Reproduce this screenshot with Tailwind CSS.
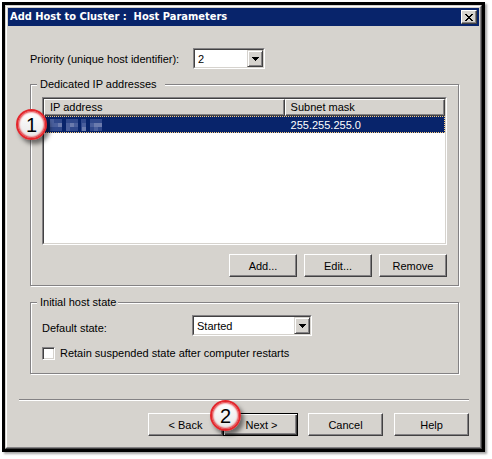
<!DOCTYPE html>
<html lang="en">
<head>
<meta charset="utf-8">
<title>Add Host to Cluster</title>
<script src="https://cdn.jsdelivr.net/npm/@tailwindcss/browser@4"></script>
</head>
<body class="bg-white pt-[2px] pr-[7px] pb-[7px] pl-[2px] font-['Liberation_Sans',sans-serif] text-[11px] leading-[16px] text-black">
<main class="relative border-[3px] border-black bg-[#d6d3ce] shadow-[2px_2px_2px_rgba(0,0,0,0.35)]">
  <div class="border border-t-[#d6d3ce] border-l-[#d6d3ce] border-r-[#424142] border-b-[#424142]">
  <div class="border border-t-white border-l-white border-r-[#848284] border-b-[#848284] px-px pt-px">

    <header class="flex h-[18px] items-center justify-between bg-[#08246b] pr-[2px] pl-[2px]">
      <h1 class="font-['DejaVu_Sans_Condensed','DejaVu_Sans',sans-serif] text-[11px] leading-[16px] font-bold whitespace-pre text-white">Add Host to Cluster :  Host Parameters</h1>
      <button type="button" aria-label="Close" class="flex h-[14px] w-[16px] items-center justify-center border border-t-white border-l-white border-r-[#424142] border-b-[#424142] bg-[#d6d3ce] shadow-[inset_-1px_-1px_0_#848284]">
        <svg class="h-[7px] w-[8px]" viewBox="0 0 8 7" shape-rendering="crispEdges"><path d="M0 0h2v1h1v1h2v-1h1v-1h2v1h-1v1h-1v1h-1v1h1v1h1v1h1v1h-2v-1h-1v-1h-2v1h-1v1h-2v-1h1v-1h1v-1h1v-1h-1v-1h-1v-1h-1z"/></svg>
      </button>
    </header>

    <form class="pr-[20px] pl-[22px]">
      <div class="mt-[22px] flex items-center">
        <label for="priority" class="w-[163px] whitespace-nowrap">Priority (unique host identifier):</label>
        <div class="relative h-[21px] w-[72px] border border-t-[#848284] border-l-[#848284] border-r-white border-b-white">
          <select id="priority" class="block h-full w-full appearance-none border border-t-[#424142] border-l-[#424142] border-r-[#d6d3ce] border-b-[#d6d3ce] bg-white pl-[3px] outline-none"><option>2</option></select>
          <span class="pointer-events-none absolute top-px right-px bottom-px flex w-[16px] items-center justify-center border border-t-[#d6d3ce] border-l-[#d6d3ce] border-r-[#424142] border-b-[#424142] bg-[#d6d3ce] shadow-[inset_1px_1px_0_#fff,inset_-1px_-1px_0_#848284]">
            <svg class="h-[4px] w-[7px]" viewBox="0 0 7 4" shape-rendering="crispEdges"><path d="M0 0h7v1h-1v1h-1v1h-1v1h-1v-1h-1v-1h-1v-1h-1z"/></svg>
          </span>
        </div>
      </div>

      <fieldset class="mt-[7px] border border-[#848284] px-[11px] pb-[8px] shadow-[1px_1px_0_#fff,inset_1px_1px_0_#fff]">
        <legend class="-ml-[5px] bg-[#d6d3ce] pr-[8px] pl-[3px]">Dedicated IP addresses</legend>
        <div class="mt-[5px] h-[148px] border border-t-[#848284] border-l-[#848284] border-r-white border-b-white">
        <div class="h-full border border-t-[#424142] border-l-[#424142] border-r-[#d6d3ce] border-b-[#d6d3ce] bg-white">
          <table class="w-full table-fixed border-separate border-spacing-0 text-left">
            <colgroup><col class="w-[60%]"><col></colgroup>
            <thead>
              <tr class="bg-[#d6d3ce]">
                <th class="h-[17px] border border-t-white border-l-white border-r-[#424142] border-b-[#424142] p-0 pl-[5px] font-normal leading-[15px] shadow-[inset_-1px_-1px_0_#848284]">IP address</th>
                <th class="h-[17px] border border-t-white border-l-white border-r-[#424142] border-b-[#424142] p-0 pl-[5px] font-normal leading-[15px] shadow-[inset_-1px_-1px_0_#848284]">Subnet mask</th>
              </tr>
            </thead>
            <tbody>
              <tr class="bg-[#08246b] text-white outline-1 -outline-offset-1 outline-[#f7cb7b] outline-dotted">
                <td class="h-[17px] p-0 pl-[6px]">
                  <svg role="img" aria-label="Hidden address" class="h-[12px] w-[52px]" viewBox="0 0 52 12" shape-rendering="crispEdges">
                    <path fill="#31498c" d="M0 0h12v12h-12zM16 0h12v12h-12zM31 0h5v12h-5zM40 0h12v12h-12z"/>
                    <path fill="#4a5f9c" d="M0 0h4v8h-4zM4 4h4v4h-4zM16 4h4v8h-4zM24 4h4v4h-4zM32 4h4v4h-4zM40 4h4v4h-4zM44 8h4v4h-4z"/>
                    <path fill="#6b7bad" d="M8 4h4v4h-4zM20 4h4v4h-4zM32 8h4v4h-4zM44 4h4v4h-4zM48 4h4v4h-4z"/>
                  </svg>
                </td>
                <td class="h-[17px] p-0 pl-[6px]">255.255.255.0</td>
              </tr>
            </tbody>
          </table>
        </div>
        </div>
        <div class="mt-[9px] flex justify-end gap-[7px]">
          <button type="button" class="h-[23px] w-[68px] border border-t-white border-l-white border-r-[#424142] border-b-[#424142] shadow-[inset_-1px_-1px_0_#848284]">Add...</button>
          <button type="button" class="h-[23px] w-[68px] border border-t-white border-l-white border-r-[#424142] border-b-[#424142] shadow-[inset_-1px_-1px_0_#848284]">Edit...</button>
          <button type="button" class="h-[23px] w-[68px] border border-t-white border-l-white border-r-[#424142] border-b-[#424142] shadow-[inset_-1px_-1px_0_#848284]">Remove</button>
        </div>
      </fieldset>

      <fieldset class="mt-[8px] border border-[#848284] px-[11px] pb-[12px] shadow-[1px_1px_0_#fff,inset_1px_1px_0_#fff]">
        <legend class="-ml-[5px] bg-[#d6d3ce] pr-[2px] pl-[3px]">Initial host state</legend>
        <div class="mt-[5px] flex items-center">
          <label for="state" class="w-[150px] pt-[5px]">Default state:</label>
          <div class="relative h-[21px] w-[120px] border border-t-[#848284] border-l-[#848284] border-r-white border-b-white">
            <select id="state" class="block h-full w-full appearance-none border border-t-[#424142] border-l-[#424142] border-r-[#d6d3ce] border-b-[#d6d3ce] bg-white pl-[3px] outline-none"><option>Started</option></select>
            <span class="pointer-events-none absolute top-px right-px bottom-px flex w-[16px] items-center justify-center border border-t-[#d6d3ce] border-l-[#d6d3ce] border-r-[#424142] border-b-[#424142] bg-[#d6d3ce] shadow-[inset_1px_1px_0_#fff,inset_-1px_-1px_0_#848284]">
              <svg class="h-[4px] w-[7px]" viewBox="0 0 7 4" shape-rendering="crispEdges"><path d="M0 0h7v1h-1v1h-1v1h-1v1h-1v-1h-1v-1h-1v-1h-1z"/></svg>
            </span>
          </div>
        </div>
        <div class="mt-[9px] flex items-center gap-[5px]">
          <input id="retain" type="checkbox" class="h-[13px] w-[13px] appearance-none border border-t-[#848284] border-l-[#848284] border-r-white border-b-white bg-white shadow-[inset_1px_1px_0_#424142,inset_-1px_-1px_0_#d6d3ce]">
          <label for="retain">Retain suspended state after computer restarts</label>
        </div>
      </fieldset>
    </form>

    <footer class="mt-[25px] mr-[10px] mb-[11px] ml-[11px] flex justify-end border-t border-[#848284] pt-[13px] shadow-[inset_0_1px_0_#fff]">
      <button type="button" class="h-[23px] w-[75px] border border-t-white border-l-white border-r-[#424142] border-b-[#424142] shadow-[inset_-1px_-1px_0_#848284]">&lt; Back</button>
      <div class="relative">
        <button type="button" class="h-[23px] w-[75px] border border-black pl-[2px] shadow-[inset_1px_1px_0_#fff,inset_-1px_-1px_0_#424142,inset_-2px_-2px_0_#848284]">Next &gt;</button>
        <span class="absolute -top-[13px] -left-[13px] flex h-[31px] w-[31px] items-center justify-center rounded-full border-2 border-[#e3262c] bg-[linear-gradient(#fff,#e8e8e8)] font-['Liberation_Sans',sans-serif] text-[20px] leading-[24px] shadow-[3px_4px_4px_rgba(0,0,0,0.5),inset_0_0_2px_1px_#e3262c]">2</span>
      </div>
      <button type="button" class="ml-[10px] h-[23px] w-[75px] border border-t-white border-l-white border-r-[#424142] border-b-[#424142] shadow-[inset_-1px_-1px_0_#848284]">Cancel</button>
      <button type="button" class="ml-[11px] h-[23px] w-[75px] border border-t-white border-l-white border-r-[#424142] border-b-[#424142] shadow-[inset_-1px_-1px_0_#848284]">Help</button>
    </footer>
  </div>
  </div>
  <span class="absolute top-[104px] left-[11px] flex h-[31px] w-[31px] items-center justify-center rounded-full border-2 border-[#e3262c] bg-[linear-gradient(#fff,#e8e8e8)] font-['Liberation_Sans',sans-serif] text-[20px] leading-[24px] shadow-[3px_4px_4px_rgba(0,0,0,0.5),inset_0_0_2px_1px_#e3262c]">1</span>
</main>
</body>
</html>
